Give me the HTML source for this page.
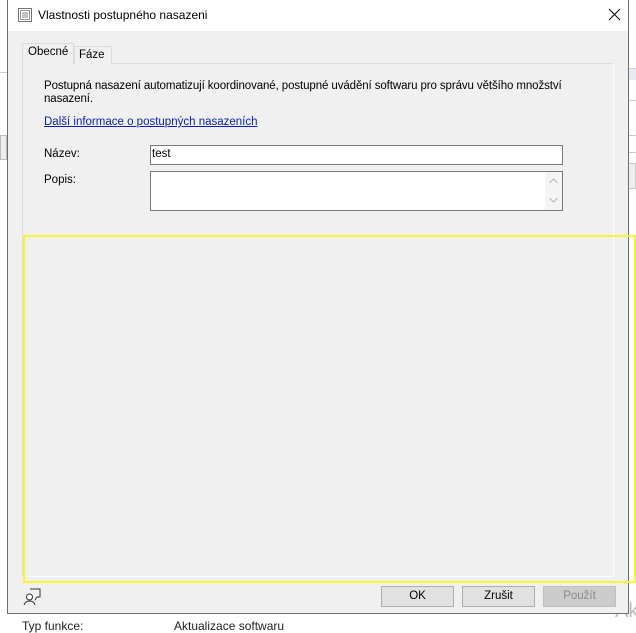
<!DOCTYPE html>
<html><head><meta charset="utf-8"><style>
*{box-sizing:border-box;margin:0;padding:0}
body{width:636px;height:628px;background:#fff;position:relative;overflow:hidden;font-family:"Liberation Sans",sans-serif;font-size:11.5px;color:#000}
.a{position:absolute}
.dlg{left:7px;top:0;width:622px;height:614px;border:1px solid #6e6e6e;border-top:none;background:#f0f0f0}
.title{left:0;top:0;width:620px;height:31px;background:#fff}
.btn{height:21px;width:73px;border:1px solid #adadad;background:#e1e1e1;text-align:center;line-height:19px}
</style></head><body>
<div class="a" style="left:628px;top:68px;width:8px;height:12px;background:#e8ecf2;border-top:1px solid #ccd"></div>
<div class="a" style="left:628px;top:100px;width:8px;height:1px;background:#ccc"></div>
<div class="a" style="left:628px;top:135px;width:8px;height:1px;background:#ccc"></div>
<div class="a" style="left:628px;top:152px;width:8px;height:1px;background:#ccc"></div>
<div class="a" style="left:628px;top:163px;width:8px;height:26px;background:#eee;border:1px solid #ccc"></div>
<div class="a" style="left:0;top:72px;width:7px;height:1px;background:#ccc"></div>
<div class="a" style="left:0;top:135px;width:7px;height:25px;background:#eee;border:1px solid #bbb"></div>
<div class="a" style="left:22px;top:619px;font-size:12px;color:#222">Typ funkce:</div>
<div class="a" style="left:174px;top:619px;font-size:12px;color:#222">Aktualizace softwaru</div>
<div class="a" style="left:615px;top:600px;font-size:20px;color:#bbb">Ak</div>

<div class="a dlg">
 <div class="a title"></div>
 <svg class="a" style="left:9px;top:7px" width="16" height="16" viewBox="0 0 16 16"><rect x="1.5" y="1.5" width="13" height="13" fill="#fff" stroke="#777"/><rect x="3.5" y="3.5" width="9" height="9" fill="none" stroke="#999"/><path d="M5 6h6M5 8h6M5 10h6" stroke="#888"/></svg>
 <div class="a" style="left:30px;top:8px;font-size:12px">Vlastnosti postupného nasazeni</div>
 <svg class="a" style="left:600px;top:8px" width="13" height="13" viewBox="0 0 13 13"><path d="M1 1L12 12M12 1L1 12" stroke="#111" stroke-width="1.1"/></svg>

 <div class="a" style="left:14px;top:63px;width:592px;height:514px;background:#f0f0f0;border:1px solid #dcdcdc;border-right-color:#fff;border-bottom-color:#fff"></div>
 <div class="a" style="left:66px;top:46px;width:38px;height:18px;border:1px solid #dcdcdc;border-bottom:none;background:#f0f0f0;padding:2px 0 0 4px">Fáze</div>
 <div class="a" style="left:14px;top:43px;width:52px;height:21px;border:1px solid #dcdcdc;border-bottom:none;background:#f0f0f0;padding:2px 0 0 5px">Obecné</div>

 <div class="a" style="left:36px;top:80px;width:540px;line-height:13px;letter-spacing:-0.1px">Postupná nasazení automatizují koordinované, postupné uvádění softwaru pro správu většího množství nasazení.</div>
 <div class="a" style="left:36px;top:116px;text-decoration:underline;color:#0b22a8">Další informace o postupných nasazeních</div>
 <div class="a" style="left:36px;top:148px">Název:</div>
 <div class="a" style="left:142px;top:145px;width:413px;height:20px;background:#fff;border:1px solid #7a7a7a;padding:2px 0 0 1px">test</div>
 <div class="a" style="left:36px;top:174px">Popis:</div>
 <div class="a" style="left:142px;top:171px;width:413px;height:40px;background:#fff;border:1px solid #7a7a7a"></div>
 <div class="a" style="left:537px;top:172px;width:17px;height:38px;background:#f4f4f4"></div>
 <svg class="a" style="left:540px;top:177px" width="11" height="30" viewBox="0 0 11 30"><path d="M1.5 6L5.5 2L9.5 6M1.5 21L5.5 25L9.5 21" fill="none" stroke="#b5b5b5"/></svg>

 <svg class="a" style="left:15px;top:586px" width="20" height="20" viewBox="0 0 20 20"><path d="M7 3h10v8h-3l-2 3" fill="none" stroke="#333"/><circle cx="6.5" cy="11" r="3" fill="#fff" stroke="#333"/><path d="M1 19c1-3 3-4 5.5-4s4.5 1 5.5 4" fill="none" stroke="#333"/></svg>
 <div class="a btn" style="left:373px;top:586px">OK</div>
 <div class="a btn" style="left:454px;top:586px">Zrušit</div>
 <div class="a btn" style="left:535px;top:586px;border-color:#bfbfbf;background:#ccc;color:#8a8a8a">Použít</div>
</div>

<div class="a" style="left:23px;top:235px;width:613px;height:348px;border:2px solid #f5f532;border-right:none"></div>
<div class="a" style="left:634px;top:235px;width:2px;height:348px;background:#f5f532"></div>
</body></html>
